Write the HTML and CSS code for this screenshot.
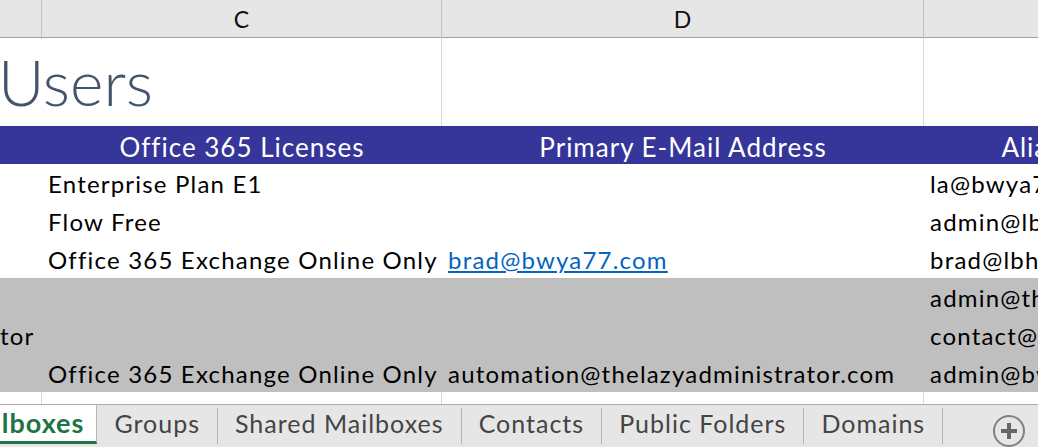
FILE: index.html
```html
<!DOCTYPE html>
<html lang="en">
<head>
  <meta charset="UTF-8" />
  <meta name="viewport" content="width=device-width, initial-scale=1.0"/>
  <title>Users - Mailboxes</title>
  <link rel="stylesheet" href="styles.css">
</head>
<body>
  <div class="sheet">
    <div class="col-heads">
      <div class="col-head"></div>
      <div class="col-head">C</div>
      <div class="col-head">D</div>
      <div class="col-head last"></div>
    </div>

    <div class="row title-row">
      <div class="cell title">Users</div>
      <div class="cell lined"></div>
      <div class="cell lined"></div>
      <div class="cell"></div>
    </div>

    <div class="row head-row">
      <div class="cell"></div>
      <div class="cell">Office 365 Licenses</div>
      <div class="cell">Primary E-Mail Address</div>
      <div class="cell">Alias</div>
    </div>

    <div class="row">
      <div class="cell"></div>
      <div class="cell">Enterprise Plan E1</div>
      <div class="cell"></div>
      <div class="cell">la@bwya77.com</div>
    </div>
    <div class="row">
      <div class="cell"></div>
      <div class="cell">Flow Free</div>
      <div class="cell"></div>
      <div class="cell">admin@lbhs.onmicrosoft.com</div>
    </div>
    <div class="row">
      <div class="cell"></div>
      <div class="cell">Office 365 Exchange Online Only</div>
      <div class="cell"><a class="mail-link" href="mailto:brad@bwya77.com">brad@bwya77.com</a></div>
      <div class="cell">brad@lbhs.onmicrosoft.com</div>
    </div>

    <div class="row shaded">
      <div class="cell"></div>
      <div class="cell"></div>
      <div class="cell"></div>
      <div class="cell">admin@thelazyadministrator.com</div>
    </div>
    <div class="row shaded">
      <div class="cell">tor</div>
      <div class="cell"></div>
      <div class="cell"></div>
      <div class="cell">contact@thelazyadministrator.com</div>
    </div>
    <div class="row shaded">
      <div class="cell"></div>
      <div class="cell">Office 365 Exchange Online Only</div>
      <div class="cell">automation@thelazyadministrator.com</div>
      <div class="cell">admin@bwya77.com</div>
    </div>

    <div class="row filler">
      <div class="cell lined"></div>
      <div class="cell lined"></div>
      <div class="cell lined"></div>
      <div class="cell"></div>
    </div>
  </div>

  <div class="tabs">
    <div class="tab active">Mailboxes</div>
    <div class="tab">Groups</div>
    <div class="tab">Shared Mailboxes</div>
    <div class="tab">Contacts</div>
    <div class="tab">Public Folders</div>
    <div class="tab">Domains</div>
    <div class="add-sheet">
      <svg width="32" height="32" viewBox="0 0 32 32">
        <circle cx="16" cy="16" r="15" fill="none" stroke="#7f7f7f" stroke-width="2"/>
        <path d="M16 8v16M8 16h16" stroke="#666" stroke-width="4"/>
      </svg>
    </div>
  </div>
</body>
</html>
```

FILE: styles.css
```css
* {
  margin: 0;
  padding: 0;
  box-sizing: border-box;
}

body {
  font-family: Lato, 'Open Sans', sans-serif;
  font-size: 24px;
  letter-spacing: 1.2px;
  color: #000;
  background: #fff;
  width: 1038px;
  height: 447px;
  overflow: hidden;
  display: flex;
  flex-direction: column;
}

.sheet {
  flex: 1;
  display: flex;
  flex-direction: column;
  overflow: hidden;
}

/* column letters */
.col-heads {
  display: grid;
  grid-template-columns: 42px 400px 482px 214px;
  height: 38px;
  background: #e6e6e6;
  border-bottom: 1px solid #9e9e9e;
}

.col-head {
  border-right: 1px solid #c3c3c3;
  text-align: center;
  font-size: 23px;
  letter-spacing: 0;
  line-height: 39px;
  color: #111;
}

.col-head.last {
  border-right: none;
}

/* rows */
.row {
  display: grid;
  grid-template-columns: 42px 400px 482px 214px;
  height: 38px;
  flex-shrink: 0;
}

.cell {
  white-space: nowrap;
  padding: 1px 6px 0;
  line-height: 38px;
}

.row .cell:first-child {
  padding-left: 0;
}

.lined {
  border-right: 1px solid #d9d9d9;
}

.title-row {
  height: 88px;
}

.title {
  font-weight: 300;
  font-size: 64px;
  letter-spacing: 0;
  line-height: 88px;
  color: #44546a;
  padding: 0;
  margin-left: -2px;
}

.head-row {
  background: #35359a;
  color: #fff;
}

.head-row .cell {
  font-size: 26px;
  letter-spacing: 1px;
  text-align: center;
  padding-top: 2px;
}

.shaded {
  background: #bfbfbf;
}

.mail-link {
  color: #0563c1;
  text-decoration: underline;
}

.filler {
  flex: 1;
  height: auto;
}

/* sheet tabs */
.tabs {
  height: 43px;
  background: #e6e6e6;
  border-top: 1px solid #ababab;
  display: flex;
  align-items: flex-start;
  overflow: hidden;
  letter-spacing: 1px;
}

.tab {
  font-size: 25px;
  color: #444;
  white-space: nowrap;
  padding: 0 17px;
  height: 36px;
  margin-top: 3px;
  line-height: 30px;
  border-right: 1px solid #b5b5b5;
}

.tab.active {
  margin-left: -47px;
  margin-top: -1px;
  height: 40px;
  line-height: 38px;
  font-size: 27px;
  background: #fff;
  color: #217346;
  font-weight: 700;
  border-bottom: 3px solid #217346;
  padding: 0 12px 0 0;
}

.add-sheet {
  margin: 10px 0 0 50px;
  width: 32px;
  height: 32px;
}
```
